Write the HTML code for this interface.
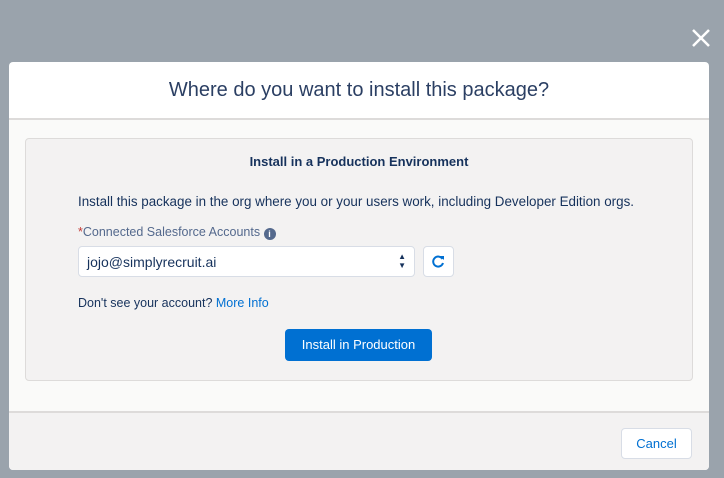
<!DOCTYPE html>
<html><head><style>
body{margin:0;width:724px;height:478px;background:#9aa3ac;font-family:"Liberation Sans",sans-serif;position:relative;overflow:hidden;color:#16325c}
.x{position:absolute;left:690px;top:27px;width:22px;height:22px}
.modal{position:absolute;left:9px;top:62px;width:700px;height:408px;background:#fff;border-radius:4px;overflow:hidden}
.hd{height:56px;border-bottom:2px solid #dddbda;text-align:center;font-size:20px;line-height:56px;color:#2b3f63;font-weight:300}
.bd{background:#fafaf9;height:291px;position:relative}
.card{position:absolute;left:16px;top:18px;width:666px;height:241px;background:#f3f2f2;border:1px solid #dddbda;border-radius:4px}
.ft{position:absolute;top:349px;left:0;right:0;height:71px;background:#f3f2f2;border-top:2px solid #dddbda}
.t{position:absolute;font-size:13.4px;color:#16325c}
.sel{position:absolute;left:52px;top:107px;width:337px;height:31px;background:#fff;border:1px solid #d8dde6;border-radius:4px;font-size:14px;line-height:30px;padding-left:8px;box-sizing:border-box}
.rf{position:absolute;left:397px;top:107px;width:31px;height:31px;background:#fff;border:1px solid #d8dde6;border-radius:4px;box-sizing:border-box}
.btn{position:absolute;left:259px;top:190px;width:147px;height:32px;background:#0070d2;border-radius:4px;color:#fff;font-size:13px;text-align:center;line-height:32px}
.cancel{position:absolute;left:612px;top:15px;width:71px;height:31px;background:#fff;border:1px solid #d8dde6;border-radius:4px;box-sizing:border-box;color:#0070d2;font-size:13px;text-align:center;line-height:29px}
</style></head><body>
<svg class="x" viewBox="0 0 22 22"><path d="M3 3L19 19M19 3L3 19" stroke="#fff" stroke-width="2.5"/></svg>
<div class="modal">
<div class="hd">Where do you want to install this package?</div>
<div class="bd">
<div class="card">
<div class="t" style="left:0;right:0;top:15px;text-align:center;font-weight:bold;font-size:13px">Install in a Production Environment</div>
<div class="t" style="left:52px;top:55px">Install this package in the org where you or your users work, including Developer Edition orgs.</div>
<div class="t" style="left:52px;top:86px;font-size:12.5px;color:#54698d"><span style="color:#c23934">*</span>Connected Salesforce Accounts <span style="display:inline-block;width:12px;height:12px;border-radius:6px;background:#54698d;color:#fff;font-size:9px;text-align:center;line-height:12px;font-weight:bold;vertical-align:-1px">i</span></div>
<div class="sel">jojo@simplyrecruit.ai<span style="position:absolute;right:8px;top:-1px;font-size:8px;line-height:9px;padding-top:6px;color:#16325c">▲<br>▼</span></div>
<div class="rf"><svg width="29" height="29" viewBox="0 0 29 29"><path d="M18.5 12A5 5 0 1 0 19 16" stroke="#0070d2" stroke-width="2" fill="none"/><path d="M16 9L20 9L20 13Z" fill="#0070d2"/></svg></div>
<div class="t" style="left:52px;top:157px;font-size:12.5px">Don't see your account? <span style="color:#0070d2">More Info</span></div>
<div class="btn">Install in Production</div>
</div>
</div>
<div class="ft"><div class="cancel">Cancel</div></div>
</div>
</body></html>
